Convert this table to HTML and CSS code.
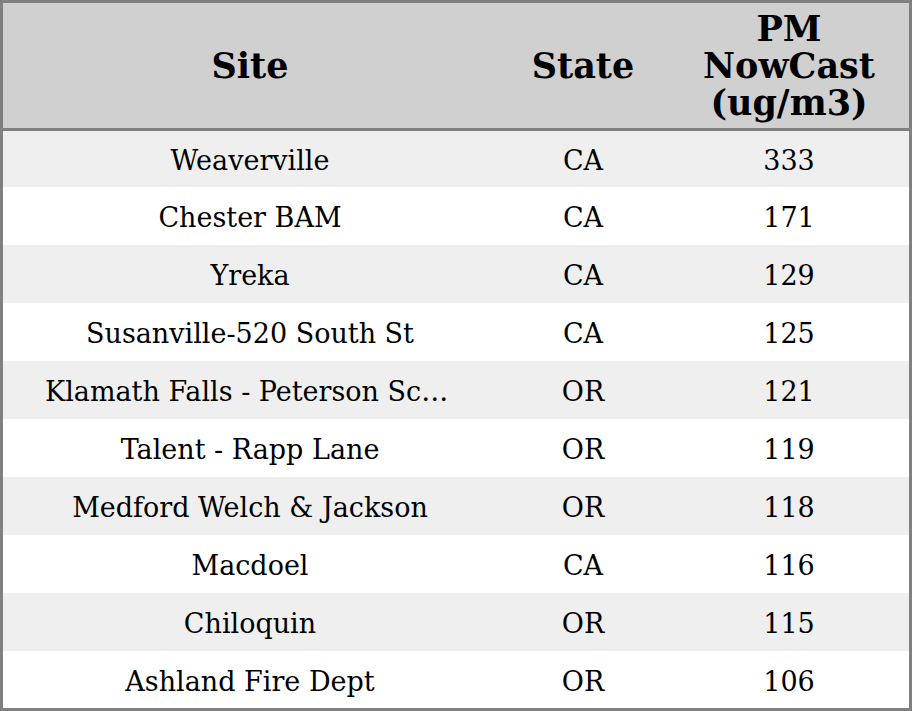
FILE: index.html
```html
<!DOCTYPE html>
<html>
<head>
<meta charset="utf-8">
<link rel="stylesheet" href="styles.css">
</head>
<body>
<div class="frame">
<table class="grid">
<colgroup><col class="c-site"><col class="c-state"><col class="c-pm"></colgroup>
<thead>
<tr><th>Site</th><th>State</th><th>PM<br>NowCast<br>(ug/m3)</th></tr>
</thead>
<tbody>
<tr><td class="site">Weaverville</td><td>CA</td><td>333</td></tr>
<tr><td class="site">Chester BAM</td><td>CA</td><td>171</td></tr>
<tr><td class="site">Yreka</td><td>CA</td><td>129</td></tr>
<tr><td class="site">Susanville-520 South St</td><td>CA</td><td>125</td></tr>
<tr><td class="site">Klamath Falls - Peterson School</td><td>OR</td><td>121</td></tr>
<tr><td class="site">Talent - Rapp Lane</td><td>OR</td><td>119</td></tr>
<tr><td class="site">Medford Welch &amp; Jackson</td><td>OR</td><td>118</td></tr>
<tr><td class="site">Macdoel</td><td>CA</td><td>116</td></tr>
<tr><td class="site">Chiloquin</td><td>OR</td><td>115</td></tr>
<tr><td class="site">Ashland Fire Dept</td><td>OR</td><td>106</td></tr>
</tbody>
</table>
</div>
</body>
</html>
```
FILE: styles.css
```css
html, body {
  margin: 0;
  padding: 0;
  background: #ffffff;
}
.frame {
  width: 912px;
  height: 711px;
  box-sizing: border-box;
  border: 3px solid #808080;
  overflow: hidden;
  font-family: "DejaVu Serif", serif;
  color: #000;
}
.grid {
  width: 906px;
  border-collapse: collapse;
  table-layout: fixed;
}
.c-site { width: 494px; }
.c-state { width: 172px; }
.c-pm { width: 240px; }
.grid th {
  height: 125px;
  padding: 0;
  background: #d0d0d0;
  border-bottom: 3px solid #808080;
  font-size: 35px;
  font-weight: bold;
  line-height: 37px;
  text-align: center;
  vertical-align: middle;
}
.grid td {
  height: 55px;
  padding: 3px 0 0;
  font-size: 27px;
  line-height: 32px;
  text-align: center;
  vertical-align: middle;
  white-space: nowrap;
  overflow: hidden;
  text-overflow: ellipsis;
}
.grid tbody tr:first-child td { height: 53px; }
.grid tbody tr:nth-child(odd) td { background: #efefef; }
.grid td.site { padding: 3px 42px 0; }
```
